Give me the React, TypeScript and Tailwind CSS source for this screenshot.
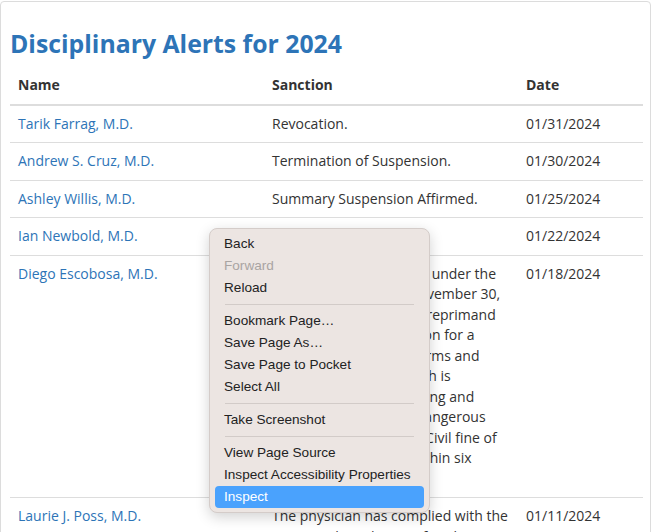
import React from 'react';

const rows = [
  { name: 'Tarik Farrag, M.D.', sanction: ['Revocation.'], date: '01/31/2024' },
  { name: 'Andrew S. Cruz, M.D.', sanction: ['Termination of Suspension.'], date: '01/30/2024' },
  { name: 'Ashley Willis, M.D.', sanction: ['Summary Suspension Affirmed.'], date: '01/25/2024' },
  { name: 'Ian Newbold, M.D.', sanction: ['Reprimand.'], date: '01/22/2024' },
  {
    name: 'Diego Escobosa, M.D.',
    sanction: [
      'The licensee was placed under the',
      'Consent Order (filed November 30,',
      '2023), which includes a reprimand',
      'and a four-year probation for a',
      'violation of its earlier terms and',
      'conditions; each of which is',
      'as required for prescribing and',
      'dispensing controlled dangerous',
      'substances, for a term. Civil fine of',
      '$10,000 is to be paid within six',
      'months.',
    ],
    date: '01/18/2024',
  },
  {
    name: 'Laurie J. Poss, M.D.',
    sanction: ['The physician has complied with the', 'terms and conditions of probation.'],
    date: '01/11/2024',
  },
];

type MenuItem = { label: string; disabled?: boolean; active?: boolean } | 'sep';

const menu: MenuItem[] = [
  { label: 'Back' },
  { label: 'Forward', disabled: true },
  { label: 'Reload' },
  'sep',
  { label: 'Bookmark Page…' },
  { label: 'Save Page As…' },
  { label: 'Save Page to Pocket' },
  { label: 'Select All' },
  'sep',
  { label: 'Take Screenshot' },
  'sep',
  { label: 'View Page Source' },
  { label: 'Inspect Accessibility Properties' },
  { label: 'Inspect', active: true },
];

const ContextMenu = () => (
  <div
    className="absolute left-[209px] top-[228px] w-[221px] rounded-[8px] border border-[#d4ccc9] bg-[#ece5e2] px-[5px] py-[4px] shadow-[0_4px_14px_rgba(0,0,0,0.18)]"
    style={{ fontFamily: '"Liberation Sans", Arial, sans-serif' }}
  >
    {menu.map((item, i) =>
      item === 'sep' ? (
        <div key={i} className="flex h-[11px] items-center px-[10px]">
          <div className="h-px w-full bg-[#d2cbc8]" />
        </div>
      ) : (
        <div
          key={i}
          className={
            'flex h-[22px] items-center whitespace-nowrap rounded-[4px] px-[9px] text-[13.6px] ' +
            (item.active ? 'bg-[#4aa2fd] text-white' : item.disabled ? 'text-[#a9a4a2]' : 'text-[#222]')
          }
        >
          {item.label}
        </div>
      )
    )}
  </div>
);

export default function App() {
  return (
    <div className="relative h-[532px] w-[653px] overflow-hidden bg-white">
      <div
        className="ml-0 mt-px h-[600px] w-[651px] rounded-t-[4px] border border-[#dcdcdc] pl-[9px] pr-[7px] pt-[26px] text-[#333]"
        style={{ fontFamily: '"Open Sans", sans-serif' }}
      >
        <h1 className="mb-[9px] text-[24.8px] font-bold leading-[30px] text-[#2d74b7]">
          Disciplinary Alerts for 2024
        </h1>
        <table className="w-[633px] table-fixed border-collapse text-[14px] leading-[20.5px]">
          <colgroup>
            <col className="w-[254px]" />
            <col className="w-[254px]" />
            <col className="w-[125px]" />
          </colgroup>
          <thead>
            <tr className="border-b-2 border-[#dddddd]">
              <th className="p-2 text-left font-bold">Name</th>
              <th className="p-2 text-left font-bold">Sanction</th>
              <th className="p-2 text-left font-bold">Date</th>
            </tr>
          </thead>
          <tbody>
            {rows.map((r) => (
              <tr key={r.name} className="border-t border-[#dddddd] align-top">
                <td className="p-2">
                  <a href="#" className="text-[#2d74b7]">
                    {r.name}
                  </a>
                </td>
                <td className="p-2">
                  {r.sanction.map((line, j) => (
                    <div key={j} className="whitespace-nowrap">
                      {line}
                    </div>
                  ))}
                </td>
                <td className="p-2">{r.date}</td>
              </tr>
            ))}
          </tbody>
        </table>
      </div>
      <ContextMenu />
    </div>
  );
}
